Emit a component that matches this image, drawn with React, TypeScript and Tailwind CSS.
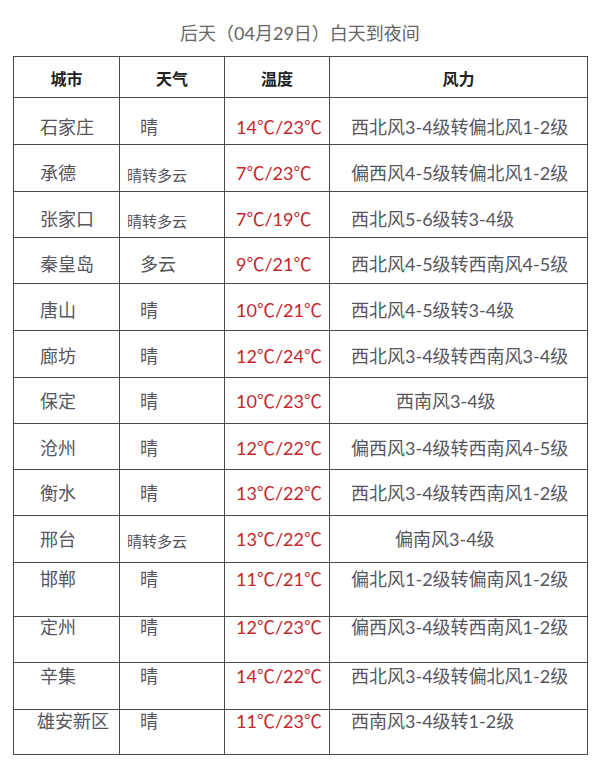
import React from 'react'

type Row = {
  city: string
  weather: string
  temp: string
  wind: string
  row: string // height of the row
  pt: string // top padding of the text
  wpt?: string // top padding for the small weather text
  wl?: string
  cl?: string
}

const rows: Row[] = [
  { city: '石家庄', weather: '晴', temp: '14℃/23℃', wind: '西北风3-4级转偏北风1-2级', row: 'h-[47px]', pt: 'pt-[19px]' },
  { city: '承德', weather: '晴转多云', temp: '7℃/23℃', wind: '偏西风4-5级转偏北风1-2级', row: 'h-[47px]', pt: 'pt-[18px]', wpt: 'pt-[20px]' },
  { city: '张家口', weather: '晴转多云', temp: '7℃/19℃', wind: '西北风5-6级转3-4级', row: 'h-[46px]', pt: 'pt-[17px]', wpt: 'pt-[19px]' },
  { city: '秦皇岛', weather: '多云', temp: '9℃/21℃', wind: '西北风4-5级转西南风4-5级', row: 'h-[46px]', pt: 'pt-[16px]' },
  { city: '唐山', weather: '晴', temp: '10℃/21℃', wind: '西北风4-5级转3-4级', row: 'h-[47px]', pt: 'pt-[16px]' },
  { city: '廊坊', weather: '晴', temp: '12℃/24℃', wind: '西北风3-4级转西南风3-4级', row: 'h-[47px]', pt: 'pt-[15px]' },
  { city: '保定', weather: '晴', temp: '10℃/23℃', wind: '西南风3-4级', row: 'h-[46px]', pt: 'pt-[13px]', wl: 'pl-[66px]' },
  { city: '沧州', weather: '晴', temp: '12℃/22℃', wind: '偏西风3-4级转西南风4-5级', row: 'h-[46px]', pt: 'pt-[14px]' },
  { city: '衡水', weather: '晴', temp: '13℃/22℃', wind: '西北风3-4级转西南风1-2级', row: 'h-[46px]', pt: 'pt-[13px]' },
  { city: '邢台', weather: '晴转多云', temp: '13℃/22℃', wind: '偏南风3-4级', row: 'h-[47px]', pt: 'pt-[13px]', wpt: 'pt-[15px]', wl: 'pl-[65px]' },
  { city: '邯郸', weather: '晴', temp: '11℃/21℃', wind: '偏北风1-2级转偏南风1-2级', row: 'h-[54px]', pt: 'pt-[6px]' },
  { city: '定州', weather: '晴', temp: '12℃/23℃', wind: '偏西风3-4级转西南风1-2级', row: 'h-[46px]', pt: 'pt-0' },
  { city: '辛集', weather: '晴', temp: '14℃/22℃', wind: '西北风3-4级转偏北风1-2级', row: 'h-[47px]', pt: 'pt-[3px]' },
  { city: '雄安新区', weather: '晴', temp: '11℃/23℃', wind: '西南风3-4级转1-2级', row: 'h-[45px]', pt: 'pt-px', cl: 'pl-[23px]' },
]

const cell = 'border-r border-b border-[#4a4a4a] whitespace-nowrap'

export default function App() {
  return (
    <div className="w-[600px] h-[775px] bg-white text-[#55555e] font-['Lato','Noto_Sans_CJK_SC',sans-serif]">
      {/* title */}
      <div className="h-[56px] pt-[22px] text-center text-[18px] leading-[22px] text-[#666]">
        后天（04月29日）白天到夜间
      </div>

      <div className="ml-[13px] w-[575px] border-t border-l border-[#4a4a4a]">
        {/* header */}
        <div className="grid grid-cols-[106px_105px_105px_258px] h-[41px] text-[16px] font-bold text-[#222]">
          {['城市', '天气', '温度', '风力'].map(t => (
            <div key={t} className="flex items-center justify-center pt-[3px] border-r border-b border-[#4a4a4a]">
              {t}
            </div>
          ))}
        </div>

        {rows.map(r => {
          const small = r.weather === '晴转多云'
          return (
            <div key={r.city} className={`grid grid-cols-[106px_105px_105px_258px] text-[18px] leading-[20px] ${r.row}`}>
              <div className={`${cell} ${r.pt} ${r.cl ?? 'pl-[26px]'}`}>{r.city}</div>
              <div className={`${cell} ${small ? `text-[15px] pl-[7px] ${r.wpt}` : `pl-[20px] ${r.pt}`}`}>
                {r.weather}
              </div>
              <div className={`${cell} ${r.pt} pl-[11px] text-[#c3262c]`}>{r.temp}</div>
              <div className={`${cell} ${r.pt} ${r.wl ?? 'pl-[21px]'}`}>{r.wind}</div>
            </div>
          )
        })}
      </div>
    </div>
  )
}
